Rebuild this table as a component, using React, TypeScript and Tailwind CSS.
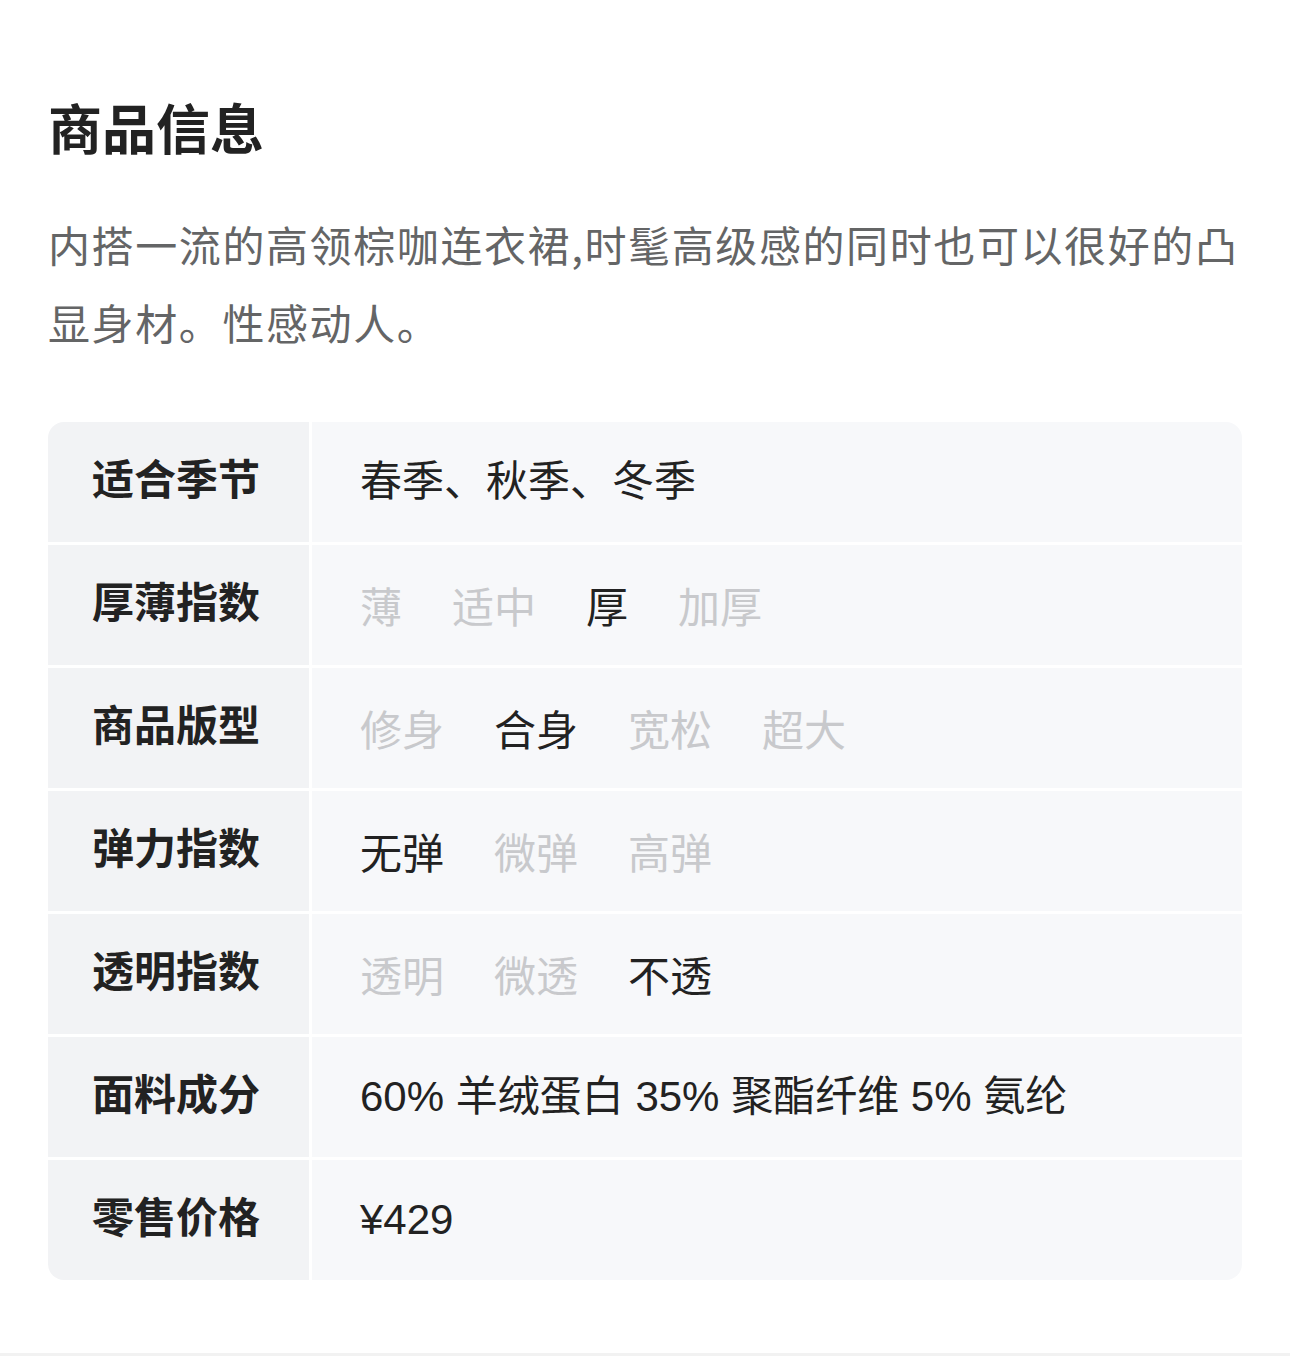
import React from "react";

type Opt = { text: string; on: boolean };
type Row = { label: string; value?: string; options?: Opt[] };

const rows: Row[] = [
  { label: "适合季节", value: "春季、秋季、冬季" },
  {
    label: "厚薄指数",
    options: [
      { text: "薄", on: false },
      { text: "适中", on: false },
      { text: "厚", on: true },
      { text: "加厚", on: false },
    ],
  },
  {
    label: "商品版型",
    options: [
      { text: "修身", on: false },
      { text: "合身", on: true },
      { text: "宽松", on: false },
      { text: "超大", on: false },
    ],
  },
  {
    label: "弹力指数",
    options: [
      { text: "无弹", on: true },
      { text: "微弹", on: false },
      { text: "高弹", on: false },
    ],
  },
  {
    label: "透明指数",
    options: [
      { text: "透明", on: false },
      { text: "微透", on: false },
      { text: "不透", on: true },
    ],
  },
  { label: "面料成分", value: "60% 羊绒蛋白 35% 聚酯纤维 5% 氨纶" },
  { label: "零售价格", value: "¥429" },
];

export default function App() {
  return (
    <div
      className="min-h-[1358px] bg-white flex flex-col"
      style={{ fontFamily: '"Noto Sans CJK SC", "Noto Sans", sans-serif' }}
    >
      <div className="px-12 pt-[89px]">
        <h1 className="text-[54px] leading-[76px] font-bold text-[#222]">商品信息</h1>
        <p className="mt-[40px] text-[42px] leading-[78px] tracking-[1.6px] text-[#646566]">
          内搭一流的高领棕咖连衣裙,时髦高级感的同时也可以很好的凸显身材。性感动人。
        </p>

        <div className="mt-[61px] rounded-2xl overflow-hidden flex flex-col gap-[3px]">
          {rows.map((r) => (
            <div key={r.label} className="flex gap-[3px] h-[120px]">
              <div className="w-[261px] shrink-0 bg-[#f2f3f5] flex items-center pl-[44px] pb-[12px] text-[42px] font-bold text-[#222]">
                {r.label}
              </div>
              <div className="flex-1 bg-[#f7f8fa] flex items-center pl-[48px] pb-[2px] text-[42px] text-[#222]">
                {r.value ? (
                  <span style={{ fontFamily: '"Liberation Sans", "Noto Sans CJK SC", sans-serif' }}>
                    {r.value}
                  </span>
                ) : (
                  <div className="flex gap-[50px]">
                    {r.options!.map((o) => (
                      <span key={o.text} className={o.on ? "text-[#222]" : "text-[#c8c9cc]"}>
                        {o.text}
                      </span>
                    ))}
                  </div>
                )}
              </div>
            </div>
          ))}
        </div>
      </div>
      <div className="mt-[73px] h-[3px] bg-[#f2f2f2]" />
    </div>
  );
}
